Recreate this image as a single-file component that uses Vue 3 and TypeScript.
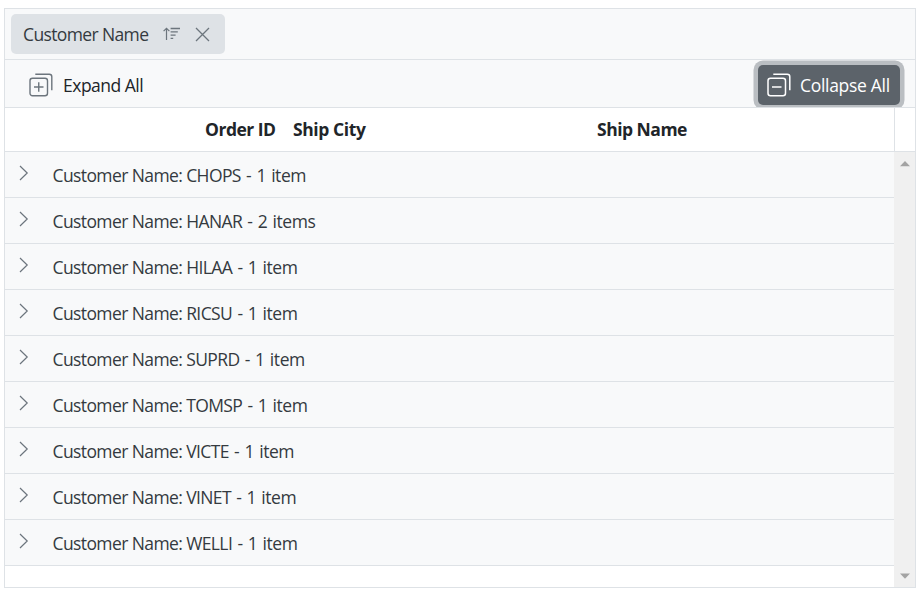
<script setup lang="ts">
interface Group {
  name: string
  count: number
}

const groups: Group[] = [
  { name: 'CHOPS', count: 1 },
  { name: 'HANAR', count: 2 },
  { name: 'HILAA', count: 1 },
  { name: 'RICSU', count: 1 },
  { name: 'SUPRD', count: 1 },
  { name: 'TOMSP', count: 1 },
  { name: 'VICTE', count: 1 },
  { name: 'VINET', count: 1 },
  { name: 'WELLI', count: 1 },
]

const countText = (g: Group): string => ` - ${g.count} ${g.count === 1 ? 'item' : 'items'}`
</script>

<template>
  <div class="grid">
    <div class="drop-area">
      <div class="chip">
        <span class="chip-text">Customer Name</span>
        <svg class="sort" width="18" height="14" viewBox="0 0 18 14" fill="none" stroke="#6c757d">
          <path d="M3.5 13V1.5M.6 4.2l2.9-2.9 2.9 2.9" stroke-width="1.2" />
          <path d="M7.6 1.5h9.4M7.6 4.8h7.2M7.6 8.1h5M7.6 11.4h2.6" stroke-width="1.3" />
        </svg>
        <svg class="close" width="15" height="15" viewBox="0 0 15 15" fill="none" stroke="#6c757d" stroke-width="1.3">
          <path d="M1 1l13 13M14 1L1 14" />
        </svg>
      </div>
    </div>

    <div class="toolbar">
      <button class="tool expand" type="button">
        <svg width="24" height="24" viewBox="0 0 24 24" fill="none" stroke="#6c757d" stroke-width="1.4">
          <rect x="1" y="5.3" width="17.5" height="17.5" rx="2.5" />
          <path d="M6.3 1.2h14a2.5 2.5 0 0 1 2.5 2.5v13.6M5 14h9.5M9.75 9.3v9.5" />
        </svg>
        <span>Expand All</span>
      </button>
      <button class="tool collapse" type="button">
        <svg width="24" height="24" viewBox="0 0 24 24" fill="none" stroke="#fff" stroke-width="1.5">
          <rect x="1" y="5.3" width="17.5" height="17.5" rx="2.5" />
          <path d="M6.3 1.2h14a2.5 2.5 0 0 1 2.5 2.5v13.6M5 14h9.5" />
        </svg>
        <span>Collapse All</span>
      </button>
    </div>

    <div class="header">
      <div class="columns">
        <span class="order">Order ID</span>
        <span class="city">Ship City</span>
        <span class="ship">Ship Name</span>
      </div>
    </div>

    <div class="content">
      <div class="rows">
        <div v-for="g in groups" :key="g.name" class="row">
          <svg class="chevron" width="10" height="16" viewBox="0 0 10 16" fill="none" stroke="#6c757d" stroke-width="1.2">
            <path d="M1 1l7.2 7L1 15" />
          </svg>
          <span class="caption">Customer Name: {{ g.name }}<span class="count">{{ countText(g) }}</span></span>
        </div>
      </div>
      <div class="scrollbar">
        <svg width="10" height="6" viewBox="0 0 10 6"><path d="M0 5.2L5 0l5 5.2z" fill="#a3a3a3" /></svg>
        <svg width="10" height="6" viewBox="0 0 10 6"><path d="M0 .5h10L5 5.7z" fill="#a3a3a3" /></svg>
      </div>
    </div>
  </div>
</template>

<style>
body {
  background: #fff;
}
</style>

<style scoped>
.grid {
  box-sizing: border-box;
  width: 912px;
  height: 580px;
  margin: 8px 0 0 4px;
  display: flex;
  flex-direction: column;
  border: 1px solid #dee2e6;
  background: #fff;
  color: #212529;
  font: 17.5px/24px "Open Sans", "Noto Sans", sans-serif;
  letter-spacing: -0.5px;
  white-space: nowrap;
}
.drop-area {
  box-sizing: border-box;
  height: 51px;
  padding: 5px 6px;
  border-bottom: 1px solid #dee2e6;
  background: #f8f9fa;
}
.chip {
  box-sizing: border-box;
  width: 214px;
  height: 40px;
  padding-left: 12px;
  display: flex;
  align-items: center;
  border-radius: 5px;
  background: #dee2e6;
  color: #343a40;
}
.chip-text {
  width: 140px;
  letter-spacing: -0.63px;
}
.close {
  margin-left: 14px;
}
.toolbar {
  box-sizing: border-box;
  height: 48px;
  padding: 0 15px;
  display: flex;
  justify-content: space-between;
  align-items: center;
  overflow: hidden;
  border-bottom: 1px solid #dee2e6;
  background: #f8f9fa;
}
.tool {
  box-sizing: border-box;
  height: 40px;
  margin: 3px 0 0;
  padding: 0 9px;
  display: flex;
  align-items: center;
  gap: 9px;
  border: 0;
  border-radius: 5px;
  background: transparent;
  color: #212529;
  font: inherit;
  letter-spacing: inherit;
}
.expand {
  gap: 10px;
}
.collapse {
  width: 142px;
  background: #5c636a;
  color: #fff;
  letter-spacing: -0.3px;
  box-shadow: 0 0 0 4.5px #babec2;
}
.header {
  box-sizing: border-box;
  height: 44px;
  padding-right: 20px;
  border-bottom: 1px solid #dee2e6;
}
.columns {
  box-sizing: border-box;
  height: 43px;
  width: 890px;
  padding: 0 0 2px 200px;
  display: flex;
  align-items: center;
  border-right: 1px solid #dee2e6;
  font-weight: 700;
}
.order {
  width: 88px;
}
.city {
  width: 304px;
  letter-spacing: -0.4px;
}
.content {
  flex: 1;
  display: flex;
}
.rows {
  flex: 1;
}
.row {
  box-sizing: border-box;
  height: 46px;
  padding-left: 14px;
  display: flex;
  align-items: center;
  border-bottom: 1px solid #dee2e6;
  background: #f8f9fa;
}
.chevron {
  margin: 0 23.5px 3px 0;
}
.caption {
  color: #343a40;
  letter-spacing: -0.6px;
}
.count {
  letter-spacing: -0.45px;
  word-spacing: 1.1px;
}
.scrollbar {
  box-sizing: border-box;
  width: 21px;
  padding: 9px 0 8px;
  display: flex;
  flex-direction: column;
  justify-content: space-between;
  align-items: center;
  background: #f0f0f0;
}
</style>
